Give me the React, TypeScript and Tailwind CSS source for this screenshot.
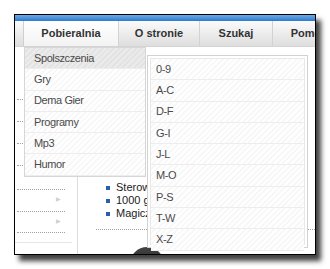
import React from "react";

const tabs = [
  { label: "Pobieralnia", w: "w-[95px]", active: true },
  { label: "O stronie", w: "w-[81px]", active: false },
  { label: "Szukaj", w: "w-[73px]", active: false },
  { label: "Pomoc", w: "w-[73px]", active: false },
];

const mainItems = ["Spolszczenia", "Gry", "Dema Gier", "Programy", "Mp3", "Humor"];
const subItems = ["0-9", "A-C", "D-F", "G-I", "J-L", "M-O", "P-S", "T-W", "X-Z"];

// left column rows (height in px, with arrow or not)
const leftRows = [
  { h: "h-[22px]", arrow: false },
  { h: "h-[22px]", arrow: false },
  { h: "h-[22px]", arrow: false },
  { h: "h-[22px]", arrow: false },
  { h: "h-[24px]", arrow: false },
  { h: "h-[22px]", arrow: true },
  { h: "h-[21px]", arrow: true },
];

const hatch =
  "bg-[repeating-linear-gradient(135deg,#ffffff_0px,#ffffff_2px,#f8f8f8_2px,#f8f8f8_4px)]";

export default function App() {
  return (
    <div
      className="w-[330px] h-[269px] bg-white pl-[14px] pt-[14px]"
      style={{ fontFamily: '"Liberation Sans", Arial, sans-serif' }}
    >
      <div className="relative w-[302px] h-[241px] border border-black bg-white overflow-hidden shadow-[5px_6px_5px_rgba(0,0,0,0.75)]">
        {/* blue top bar */}
        <div className="h-[6px] bg-gradient-to-b from-[#6aaae8] to-[#2f7acb]" />

        {/* tab bar */}
        <div className="flex h-[26px] bg-gradient-to-b from-[#fbfbfb] to-[#dedede] border-b border-[#d4d4d4]">
          <div className="w-[9px] shrink-0 border-r border-[#cfcfcf]" />
          {tabs.map((t) => (
            <div
              key={t.label}
              className={`${t.w} shrink-0 flex items-center justify-center text-[11px] font-bold text-[#333] border-r border-[#d2d2d2] ${
                t.active ? "bg-gradient-to-b from-white to-[#f3f3f3]" : ""
              }`}
            >
              {t.label}
            </div>
          ))}
        </div>

        {/* page content under the menus */}
        <div className="flex">
          <div className="w-[62px] shrink-0 pt-[31px]">
            {leftRows.map((r, i) => (
              <div
                key={i}
                className={`${r.h} ml-[2px] w-[48px] border-b border-dotted border-[#a0a0a0] relative`}
              >
                {r.arrow && (
                  <span className="absolute right-[4px] top-[5px] text-[6px] text-[#cfcfcf]">
                    ▶
                  </span>
                )}
              </div>
            ))}
            <div className="mt-[9px] w-[57px] border-b border-[#e6e6e6]" />
          </div>
          <div className="w-px h-[210px] bg-[#dcdcdc]" />
          <div className="flex-1 pt-[134px]">
            <ul className="ml-[28px] text-[11px] leading-[13px] text-[#222] whitespace-nowrap">
              {["Sterow", "1000 g", "Magicz"].map((s) => (
                <li key={s} className="flex items-center gap-[6px]">
                  <span className="w-[4px] h-[4px] shrink-0 bg-[#2a5fb0]" />
                  {s}
                </li>
              ))}
            </ul>
            <div className="ml-[18px] mt-[9px] border-b border-dotted border-[#a0a0a0]" />
            <div className="ml-[52px] mt-[17px] w-[34px] h-[34px] rounded-full bg-gradient-to-b from-[#444] to-[#111]" />
          </div>
        </div>

        {/* main dropdown */}
        <div className="absolute left-[9px] top-[32px] w-[122px] h-[130px] border border-[#d6d6d6] bg-white">
          {mainItems.map((m, i) => (
            <div
              key={m}
              className={`h-[21.3px] flex items-center pl-[9px] text-[11px] tracking-[-0.4px] text-[#4a4a4a] border-b border-[#ededed] ${
                i === 0
                  ? "bg-[repeating-linear-gradient(135deg,#ebebeb_0px,#ebebeb_2px,#e3e3e3_2px,#e3e3e3_4px)]"
                  : hatch
              }`}
            >
              {m}
            </div>
          ))}
        </div>

        {/* sub dropdown */}
        <div className="absolute left-[132px] top-[40px] w-[161px] h-[193px] border border-[#d2d2d2] bg-white p-[2px]">
          <div className="h-full border border-[#e8e8e8]">
            {subItems.map((s) => (
              <div
                key={s}
                className={`h-[21.3px] flex items-center pl-[5px] text-[11px] tracking-[-0.4px] text-[#4a4a4a] border-b border-[#ededed] ${hatch}`}
              >
                {s}
              </div>
            ))}
          </div>
        </div>
      </div>
    </div>
  );
}
